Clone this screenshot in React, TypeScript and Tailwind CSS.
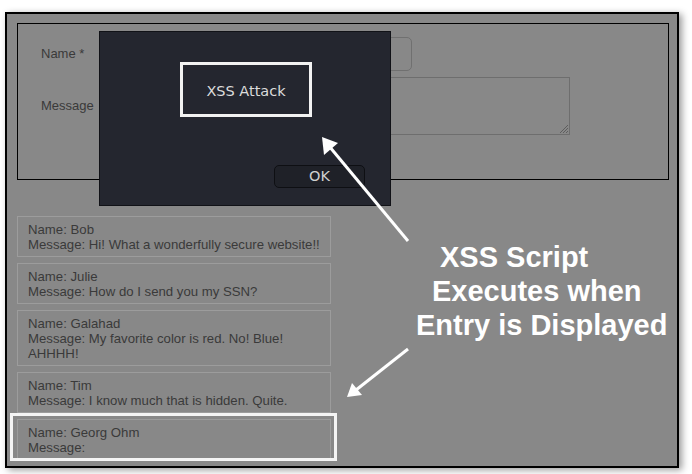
import React from "react";

type Entry = { name: string; message: string };

const entries: Entry[] = [
  { name: "Bob", message: "Hi! What a wonderfully secure website!!" },
  { name: "Julie", message: "How do I send you my SSN?" },
  { name: "Galahad", message: "My favorite color is red. No! Blue! AHHHH!" },
  { name: "Tim", message: "I know much that is hidden. Quite." },
  { name: "Georg Ohm", message: "" },
];

const Arrows = () => (
  <svg
    className="absolute left-0 top-0 pointer-events-none"
    width={692}
    height={474}
    viewBox="0 0 692 474"
  >
    {/* arrow to the alert */}
    <line x1={408} y1={241} x2={329} y2={146} stroke="#fff" strokeWidth={3} />
    <polygon points="322,137 324,155 338,143" fill="#fff" />
    {/* arrow to the stored entry */}
    <line x1={408} y1={349} x2={356} y2={390} stroke="#fff" strokeWidth={3} />
    <polygon points="347,397 352,383 362,395" fill="#fff" />
  </svg>
);

export default function App() {
  return (
    <div className="relative w-[692px] h-[474px] bg-white pl-[5px] pt-[12px] overflow-hidden font-['Liberation_Sans',Arial,sans-serif]">
      <div className="w-[674px] h-[456px] border-2 border-black bg-[#888888] shadow-[3px_2px_7px_rgba(0,0,0,0.4)] pl-[10px] pt-[9px] overflow-hidden">
        {/* guestbook form */}
        <div className="w-[652px] h-[157px] border border-black pt-[13px] pl-[23px]">
          <div className="grid grid-cols-[109px_auto] gap-y-[6px] items-center text-[13px] text-[#3a3a3a]">
            <span>Name *</span>
            <div className="w-[262px] h-[34px] rounded-[5px] border border-[#707070]" />
            <span>Message</span>
            <div className="relative w-[420px] h-[58px] border border-[#6e6e6e]">
              <svg className="absolute right-0 bottom-0" width={12} height={12} viewBox="0 0 12 12">
                <path d="M11 3 L3 11 M11 6 L6 11 M11 9 L9 11" stroke="#5e5e5e" strokeWidth={1} />
              </svg>
            </div>
          </div>
          <div className="flex pl-[198px] pt-[7px]">
            <div className="h-[24px] w-[111px] rounded-[5px] border border-[#707070] flex items-center justify-center text-[13px] text-[#3a3a3a]">
              Sign Guestbook
            </div>
          </div>
        </div>

        {/* entries */}
        <div className="flex flex-col gap-[6px] mt-[36px] w-[314px]">
          {entries.map((e) => (
            <div
              key={e.name}
              className="border border-[#9c9c9c] pt-[5px] pb-[4px] pl-[10px] pr-[8px] text-[13.2px] leading-[15px] text-[#3a3a3a]"
            >
              <div>Name: {e.name}</div>
              <div>Message: {e.message}</div>
            </div>
          ))}
        </div>
      </div>

      {/* alert dialog */}
      <div className="absolute left-[99px] top-[31px] w-[292px] h-[175px] bg-[#24262f] border border-[#111217] font-['DejaVu_Sans',sans-serif]">
        <div className="absolute left-[80px] top-[30px] w-[132px] h-[55px] pt-[4px] border-[3px] border-[#f2f2f2] flex items-center justify-center text-[14.5px] text-[#dcdcdc]">
          XSS Attack
        </div>
        <div className="absolute left-[174px] top-[133px] w-[91px] h-[23px] rounded-[5px] border border-[#0e0f13] bg-[#1f2128] flex items-center justify-center text-[14.5px] text-[#d0d0d0]">
          OK
        </div>
      </div>

      {/* highlight around injected entry */}
      <div className="absolute left-[10px] top-[413px] w-[327px] h-[48px] border-[3px] border-[#f4f4f4]" />

      {/* annotation */}
      <div className="absolute left-[416px] top-[240px] text-[29px] leading-[34px] font-bold text-white">
        <div className="ml-[24px]">XSS Script</div>
        <div className="ml-[16px]">Executes when</div>
        <div>Entry is Displayed</div>
      </div>

      <Arrows />
    </div>
  );
}
